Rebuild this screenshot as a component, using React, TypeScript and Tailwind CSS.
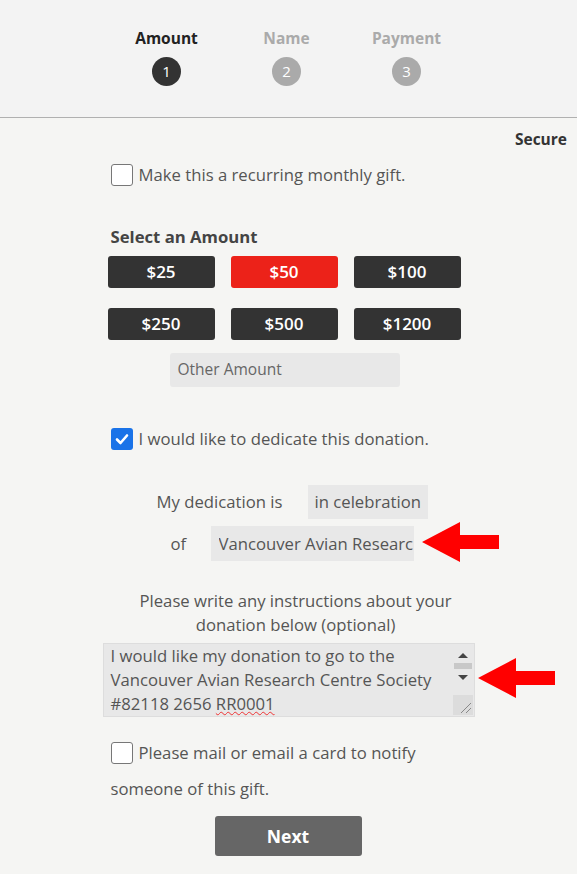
import React from "react";

function Box({ checked = false }: { checked?: boolean }) {
  if (checked) {
    return (
      <div className="w-[22px] h-[22px] rounded-[3px] bg-[#1a73e8] flex items-center justify-center shrink-0">
        <svg width="16" height="16" viewBox="0 0 16 16">
          <path d="M3 8.5 L6.5 12 L13 4.5" fill="none" stroke="white" strokeWidth="2.6" strokeLinecap="round" strokeLinejoin="round" />
        </svg>
      </div>
    );
  }
  return <div className="w-[22px] h-[22px] rounded-[3px] border border-[#777] bg-white shrink-0" />;
}

function Arrow() {
  return (
    <svg width="77" height="40" viewBox="0 0 77 40">
      <polygon points="0,20 38,0 38,13 77,13 77,27 38,27 38,40" fill="#ff0000" />
    </svg>
  );
}

function Step({ label, n, active }: { label: string; n: number; active?: boolean }) {
  return (
    <div className="w-[120px] flex flex-col items-center">
      <div className={`text-[15.5px] font-bold leading-[20px] ${active ? "text-[#222]" : "text-[#aaa]"}`}>{label}</div>
      <div
        className={`mt-[9px] w-[29px] h-[29px] rounded-full flex items-center justify-center text-white text-[15px] ${active ? "bg-[#333]" : "bg-[#aaa]"}`}
      >
        {n}
      </div>
    </div>
  );
}

function Amt({ v, red }: { v: string; red?: boolean }) {
  return (
    <div
      className={`w-[107px] h-[32px] rounded-[3px] flex items-center justify-center text-white text-[17px] font-semibold ${red ? "bg-[#ec2219]" : "bg-[#333333]"}`}
    >
      {v}
    </div>
  );
}

export default function App() {
  return (
    <div
      className="w-[577px] min-h-[874px] bg-[#f5f5f3] text-[#555] relative overflow-hidden"
      style={{ fontFamily: '"Open Sans", "Noto Sans", sans-serif' }}
    >
      <div className="h-[118px] bg-[#f3f3f3] border-b border-[#b0b0b0] flex justify-center pt-[28px] pr-[4px]">
        <Step label="Amount" n={1} active />
        <Step label="Name" n={2} />
        <Step label="Payment" n={3} />
      </div>

      <div className="flex justify-end pr-[10px] pt-[11px] text-[15.5px] font-bold text-[#333] leading-[20px]">Secure</div>

      <div className="w-[372px] mx-auto">
        <div className="mt-[15px] flex items-center gap-[6px] pl-[8px]">
          <Box />
          <span className="text-[16.7px] leading-[22px]">Make this a recurring monthly gift.</span>
        </div>

        <div className="mt-[40px] pl-[8px] text-[16.7px] font-bold text-[#444] leading-[22px]">Select an Amount</div>

        <div className="mt-[8px] pl-[5px] grid grid-cols-[107px_107px_107px] gap-x-[16px] gap-y-[20px]">
          <Amt v="$25" />
          <Amt v="$50" red />
          <Amt v="$100" />
          <Amt v="$250" />
          <Amt v="$500" />
          <Amt v="$1200" />
        </div>

        <div className="mt-[13px] ml-[67px] w-[230px] h-[34px] rounded-[3px] bg-[#e8e8e8] flex items-center px-[8px] text-[15.5px] text-[#666]">
          Other Amount
        </div>

        <div className="mt-[41px] flex items-center gap-[6px] pl-[8px]">
          <Box checked />
          <span className="text-[16.7px] leading-[22px]">I would like to dedicate this donation.</span>
        </div>

        <div className="mt-[35px] flex items-center">
          <span className="ml-[54px] text-[16.7px] w-[151px]">My dedication is</span>
          <div className="w-[120px] h-[34px] bg-[#e8e8e8] flex items-center px-[7px] text-[16.7px] whitespace-nowrap overflow-hidden">
            in celebration
          </div>
        </div>

        <div className="mt-[7px] flex items-center relative">
          <span className="ml-[68px] text-[16.7px] w-[40px]">of</span>
          <div className="w-[203px] h-[35px] bg-[#e8e8e8] pl-[8px] pr-[1px]">
            <div className="h-full flex items-center text-[16.7px] whitespace-nowrap overflow-hidden">
              Vancouver Avian Research Centre Society
            </div>
          </div>
          <div className="absolute left-[319px] top-[-4px]">
            <Arrow />
          </div>
        </div>

        <div className="mt-[28px] text-center text-[16.7px] leading-[24px] pl-[14px]">
          Please write any instructions about your
          <br />
          donation below (optional)
        </div>

        <div className="mt-[6px] relative w-[372px] h-[74px] bg-[#e8e8e8] border border-[#ddd]">
          <div className="pl-[7px] pr-[28px] text-[16.7px] leading-[24px] text-[#555]">
            I would like my donation to go to the Vancouver Avian Research Centre Society #82118 2656{" "}
            <span className="underline decoration-wavy decoration-[#e33] decoration-1 underline-offset-[1px]">RR0001</span>
          </div>
          <div className="absolute right-[1px] top-[1px] w-[20px] h-[52px] flex flex-col items-center">
            <svg width="20" height="14" viewBox="0 0 20 14" className="mt-[3px]">
              <polygon points="5,10 15,10 10,5" fill="#444" />
            </svg>
            <div className="w-[18px] h-[6px] bg-[#c8c8c8] mt-[1px]" />
            <svg width="20" height="14" viewBox="0 0 20 14" className="mt-[1px]">
              <polygon points="5,5 15,5 10,10" fill="#444" />
            </svg>
          </div>
          <div className="absolute right-[1px] bottom-[1px] w-[20px] h-[20px] bg-[#dcdcdc]">
            <svg width="20" height="20" viewBox="0 0 20 20">
              <line x1="8" y1="18" x2="18" y2="8" stroke="#888" strokeWidth="1" />
              <line x1="13" y1="18" x2="18" y2="13" stroke="#888" strokeWidth="1" />
            </svg>
          </div>
          <div className="absolute left-[374px] top-[14px]">
            <Arrow />
          </div>
        </div>

        <div className="mt-[25px] flex items-center gap-[6px] pl-[8px]">
          <Box />
          <span className="text-[16.7px] leading-[22px]">Please mail or email a card to notify</span>
        </div>
        <div className="mt-[14px] pl-[8px] text-[16.7px] leading-[22px]">someone of this gift.</div>

        <div className="mt-[16px] ml-[112px] w-[147px] h-[40px] rounded-[3px] bg-[#666] flex items-center justify-center text-white text-[17.5px] font-bold">
          Next
        </div>
      </div>
    </div>
  );
}
